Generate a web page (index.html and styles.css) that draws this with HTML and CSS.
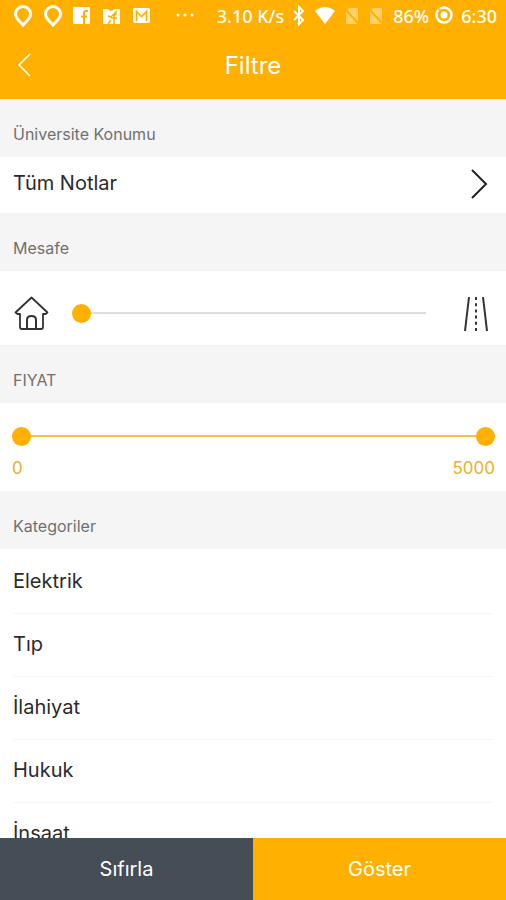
FILE: index.html
```html
<!DOCTYPE html>
<html lang="tr">
<head>
<meta charset="utf-8">
<meta name="viewport" content="width=device-width, initial-scale=1">
<title>Filtre</title>
<link rel="stylesheet" href="styles.css">
</head>
<body>
<header class="top">
  <div class="status">
    <div class="notices">
      <svg width="20" height="24" viewBox="0 0 20 24"><path d="M10 2.500a7.500 7.500 0 0 0-7.500 7.500c0 4.500 4 7 7.500 11 3.500-4 7.500-6.500 7.500-11A7.500 7.500 0 0 0 10 2.500z" fill="none" stroke="#fff" stroke-width="3"/></svg>
      <svg width="20" height="24" viewBox="0 0 20 24"><path d="M10 2.500a7.500 7.500 0 0 0-7.500 7.500c0 4.500 4 7 7.500 11 3.500-4 7.500-6.500 7.500-11A7.500 7.500 0 0 0 10 2.500z" fill="none" stroke="#fff" stroke-width="3"/></svg>
      <svg width="20" height="24" viewBox="0 0 20 24"><rect x="0" y="3" width="17" height="17" rx="1" fill="#fff"/><path d="M15 7h-2q-2 0-2 2V20M8 12.500h6" fill="none" stroke="#ffb000" stroke-width="2"/></svg>
      <svg width="20" height="24" viewBox="0 0 20 24"><path d="M0 5h4l4 2 4-2h5v15H0z" fill="#fff"/><path d="M14 7L8 13l-3-1M14 10q-3 0-3 3v7M8 14h6M5 20l3-4" fill="none" stroke="#ffb000" stroke-width="1.500"/></svg>
      <svg width="20" height="24" viewBox="0 0 20 24"><rect x="0" y="4" width="17" height="15" rx="2" fill="#fff"/><path d="M3.500 17V7.500l5 5 5-5V17" fill="none" stroke="#ffb000" stroke-width="1.600"/></svg>
    </div>
    <svg class="more" width="20" height="24" viewBox="0 0 20 24"><g fill="#fff"><circle cx="3" cy="11" r="1.500"/><circle cx="10" cy="11" r="1.500"/><circle cx="17" cy="11" r="1.500"/></g></svg>
    <span class="speed">3.10 K/s</span>
    <svg class="bluetooth" width="14" height="24" viewBox="0 0 14 24"><path d="M2 7l9 9-4 4V3l4 4-9 9" fill="none" stroke="#fff" stroke-width="2"/></svg>
    <svg class="wifi" width="20" height="24" viewBox="0 0 20 24"><path d="M0 7q10-8 20 0L10 20z" fill="#fff"/></svg>
    <svg class="sim" width="14" height="24" viewBox="0 0 14 24"><path d="M4 4h9v16H1V7z" fill="#ffd16b"/><path d="M0 5l14 15" stroke="#ffb000" stroke-width="2"/></svg>
    <svg class="sim" width="14" height="24" viewBox="0 0 14 24"><path d="M4 4h9v16H1V7z" fill="#ffd16b"/><path d="M0 5l14 15" stroke="#ffb000" stroke-width="2"/></svg>
    <span class="charge">86%</span>
    <svg width="18" height="24" viewBox="0 0 18 24"><circle cx="9" cy="11" r="7.500" fill="none" stroke="#fff" stroke-width="2.500"/><circle cx="9" cy="11" r="3.500" fill="#fff"/><path d="M3 4l3 3" stroke="#ffb000" stroke-width="1.500"/></svg>
    <time>6:30</time>
  </div>
  <div class="bar">
    <button class="back" type="button" aria-label="Geri"><svg width="16" height="26" viewBox="0 0 16 26"><path d="M14 2L3 13l11 11" fill="none" stroke="#fff" stroke-width="1.600"/></svg></button>
    <h1>Filtre</h1>
  </div>
</header>
<main>
  <h2>Üniversite Konumu</h2>
  <button class="place" type="button"><span>Tüm Notlar</span><svg width="20" height="32" viewBox="0 0 20 32"><path d="M3 3l14 14L3 31" fill="none" stroke="#222" stroke-width="2"/></svg></button>
  <h2><label for="distance">Mesafe</label></h2>
  <div class="distance">
    <svg width="36" height="36" viewBox="0 0 36 36"><g fill="none" stroke="#333" stroke-linejoin="round" stroke-linecap="round"><path d="M2.500 17.500L18.500 2.500l16 15-2 1.500h-2.500v13q0 2-2 2H9q-2 0-2-2V19H4.500z" stroke-width="1.800"/><path d="M14 34V25q0-4 4.500-4t4.500 4v9" stroke-width="2"/></g></svg>
    <input id="distance" class="range" type="range" min="0" max="100" value="0">
    <svg width="26" height="36" viewBox="0 0 26 36"><g fill="none" stroke="#333"><path d="M6 2L2 36M20 2l4 34" stroke-width="2"/><path d="M13 2v34" stroke-width="2" stroke-dasharray="3 3.200"/></g></svg>
  </div>
  <h2>FIYAT</h2>
  <div class="price">
    <div class="pair">
      <input class="range" type="range" min="0" max="5000" value="0" aria-label="En düşük fiyat">
      <input class="range" type="range" min="0" max="5000" value="5000" aria-label="En yüksek fiyat">
    </div>
    <div class="limits"><output>0</output><output>5000</output></div>
  </div>
  <h2>Kategoriler</h2>
  <ul>
    <li>Elektrik</li>
    <li>Tıp</li>
    <li>İlahiyat</li>
    <li>Hukuk</li>
    <li>İnşaat</li>
  </ul>
</main>
<footer>
  <button class="reset" type="button">Sıfırla</button>
  <button class="show" type="button">Göster</button>
</footer>
</body>
</html>
```
FILE: styles.css
```css
* { box-sizing: border-box; }
body {
  margin: 0;
  height: 100vh;
  display: flex;
  flex-direction: column;
  background: #fff;
  color: #2b2b2b;
  font: 400 20px/28px Inter, "Liberation Sans", sans-serif;
}
button { border: 0; font: inherit; color: inherit; cursor: pointer; }
svg { display: block; flex: none; }
.top { background: #ffb000; color: #fff; }
.status {
  display: flex;
  align-items: center;
  height: 32px;
  padding: 0 9px 0 13px;
  font: 500 18px/24px "Noto Sans", sans-serif;
}
.notices { display: flex; gap: 10px; }
.more { margin-left: 22px; }
.speed { margin-left: auto; }
.bluetooth { margin-left: 8px; }
.wifi { margin: 0 10px 0 9px; }
.sim { margin-right: 10px; }
.charge { margin-right: 6px; }
time { margin-left: 8px; }
.bar {
  display: grid;
  grid-template-columns: 48px 1fr 48px;
  align-items: center;
  height: 67px;
}
.back { display: flex; justify-content: center; padding: 10px 0 12px; background: none; }
h1 { margin: 0; text-align: center; font-size: 24px; font-weight: 400; line-height: 32px; }
main { flex: 1; min-height: 0; overflow: hidden; }
h2 {
  margin: 0;
  padding: 24px 13px 12px;
  background: #f5f5f5;
  color: #707070;
  font-size: 16px;
  font-weight: 400;
  line-height: 22px;
}
.place {
  display: flex;
  justify-content: space-between;
  align-items: center;
  width: 100%;
  height: 56px;
  padding: 0 17px 4px 13px;
  background: #fff;
}
.distance {
  display: flex;
  align-items: center;
  height: 74px;
  padding: 10px 17px 0 13px;
}
.range {
  appearance: none;
  flex: 1;
  min-width: 0;
  height: 20px;
  margin: 0;
  background: linear-gradient(#ddd, #ddd) center / 100% 2px no-repeat;
}
.range::-webkit-slider-thumb {
  appearance: none;
  width: 19px;
  height: 19px;
  border-radius: 50%;
  background: #ffb000;
  pointer-events: auto;
}
.distance .range { margin: 0 37px 0 23px; }
.price { height: 88px; padding: 23px 11px 0 12px; }
.pair {
  display: grid;
  background: linear-gradient(#f6c14a, #f6c14a) center / 100% 2px no-repeat;
}
.pair .range { grid-area: 1 / 1; width: 100%; background: none; pointer-events: none; }
.limits {
  display: flex;
  justify-content: space-between;
  padding-top: 11px;
  color: #e9b02c;
  font-size: 17px;
  font-weight: 400;
  line-height: 22px;
}
ul { margin: 0; padding: 2px 13px 0; list-style: none; }
li { height: 63px; padding-top: 16px; border-bottom: 1px solid #f6f6f6; }
footer { display: grid; grid-template-columns: 1fr 1fr; height: 62px; }
footer button { color: #fff; }
.reset { background: #454d57; }
.show { background: #ffb000; }
```
